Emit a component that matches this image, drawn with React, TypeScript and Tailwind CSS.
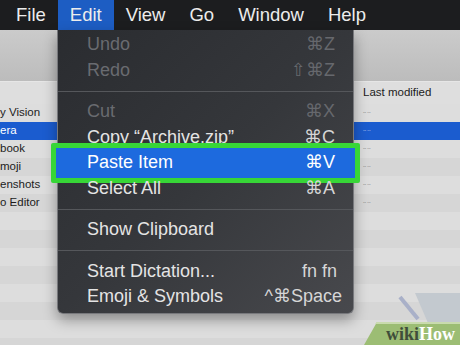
import React from "react";

type Item =
  | { sep: true }
  | { sep?: false; label: string; keys: string; disabled?: boolean; active?: boolean; shift?: number };

const items: Item[] = [
  { label: "Undo", keys: "⌘Z", disabled: true },
  { label: "Redo", keys: "⇧⌘Z", disabled: true },
  { sep: true },
  { label: "Cut", keys: "⌘X", disabled: true },
  { label: "Copy “Archive.zip”", keys: "⌘C" },
  { label: "Paste Item", keys: "⌘V", active: true },
  { label: "Select All", keys: "⌘A" },
  { sep: true },
  { label: "Show Clipboard", keys: "" },
  { sep: true },
  { label: "Start Dictation...", keys: "fn fn", shift: 2 },
  { label: "Emoji & Symbols", keys: "^⌘Space", shift: 7 },
];

const leftRows = ["y Vision", "era", "book", "moji", "enshots", "o Editor"];

function Stripes({ names, dashes }: { names?: string[]; dashes?: boolean }) {
  const rows = Array.from({ length: 14 });
  return (
    <div className="flex flex-col shrink-0">
      {rows.map((_, i) => {
        const selected = i === 1;
        return (
          <div
            key={i}
            className={
              "h-[18px] shrink-0 flex items-center whitespace-nowrap overflow-hidden " +
              (selected ? "bg-[#1b5ccf] text-white" : i % 2 === 0 ? "bg-[#dddddd] text-[#1c1c1c]" : "bg-[#d6d6d6] text-[#1c1c1c]")
            }
          >
            {names && <span className="text-[11.5px]">{names[i]}</span>}
            {dashes && i < 6 && (
              <span className={"text-[5px] tracking-tight pl-[10px] " + (selected ? "text-[#c8d6f5]" : "text-[#777]")}>-- --</span>
            )}
          </div>
        );
      })}
    </div>
  );
}

function Pane({ className, header, children }: { className: string; header?: string; children: React.ReactNode }) {
  return (
    <div className={"flex flex-col overflow-hidden " + className}>
      <div className="h-[52px] shrink-0 bg-gradient-to-b from-[#cbcbcb] to-[#bcbcbc] border-b border-[#e6e6e6]" />
      <div className="h-[22px] shrink-0 bg-[#dedede] flex items-center pl-[10px] text-[11.5px] text-[#1c1c1c]">
        {header}
      </div>
      {children}
    </div>
  );
}

export default function App() {
  return (
    <div
      className="relative w-[460px] h-[345px] overflow-hidden bg-[#dadada]"
      style={{ fontFamily: '"Liberation Sans", Arial, "DejaVu Sans", sans-serif' }}
    >
      {/* menu bar */}
      <div className="h-[30px] bg-[#1c1d1f] flex items-stretch pl-[4px] text-[18.5px] text-[#ececec]">
        <div className="px-3 flex items-center">File</div>
        <div className="px-3 flex items-center bg-[#1d5dc3]">Edit</div>
        <div className="px-3 flex items-center">View</div>
        <div className="px-3 flex items-center">Go</div>
        <div className="px-3 flex items-center">Window</div>
        <div className="px-3 flex items-center">Help</div>
      </div>

      {/* finder window behind */}
      <div className="flex h-[315px] overflow-hidden">
        <Pane className="w-[58px]">
          <Stripes names={leftRows} />
        </Pane>
        <Pane className="flex-1">
          <Stripes />
        </Pane>
        <Pane className="w-[107px]" header="Last modified">
          <Stripes dashes />
        </Pane>
      </div>

      {/* Edit menu */}
      <div className="absolute left-[57px] top-[30px] w-[297px] pt-[2px] pb-[3px] rounded-b-[6px] border-x border-b border-[#77787c] bg-gradient-to-br from-[#2a2c30] via-[#35373b] to-[#48494d] shadow-[0_6px_14px_rgba(0,0,0,0.35)] text-[18px]">
        {items.map((it, i) =>
          it.sep ? (
            <div key={i} className="h-[16px] flex items-center">
              <div className="h-px w-full bg-[#55575b]" />
            </div>
          ) : (
            <div key={i} className="relative h-[25.5px] flex items-center justify-between pl-[29px] pr-[18px]">
              {it.active && (
                <div className="absolute left-[-7px] right-[-7px] top-[-7px] bottom-[-7px] border-[5px] border-[#37d637] bg-[#1d6ade] rounded-[2px]" />
              )}
              <span
                className={
                  "relative whitespace-nowrap " +
                  (it.disabled ? "text-[#696b70]" : it.active ? "text-white" : "text-[#e4e4e4]")
                }
              >
                {it.label}
              </span>
              <span
                className={
                  "relative whitespace-nowrap " +
                  (it.disabled ? "text-[#66686d]" : it.active ? "text-white" : "text-[#d6d6d6]")
                }
                style={it.shift ? { marginRight: -it.shift } : undefined}
              >
                {it.keys}
              </span>
            </div>
          )
        )}
      </div>

      {/* wikiHow mark */}
      <svg className="absolute right-0 bottom-0" width="100" height="52" viewBox="0 0 100 52">
        <polygon points="55,0 100,0 100,30 68,30" fill="#c3c9cf" />
        <line x1="40" y1="4" x2="58" y2="26" stroke="#a9b0c8" strokeWidth="4" />
        <polygon points="17,29 100,29 100,52 4,52" fill="#9cbd74" />
        <polygon points="17,29 100,29 100,31 15,31" fill="#c9dbae" />
      </svg>
      <div
        className="absolute right-[5px] bottom-[2px] text-[18px] font-bold leading-none"
        style={{ fontFamily: '"Liberation Serif", "DejaVu Serif", serif' }}
      >
        <span className="text-[#3f4d3a]">wiki</span>
        <span className="text-white">How</span>
      </div>
    </div>
  );
}
